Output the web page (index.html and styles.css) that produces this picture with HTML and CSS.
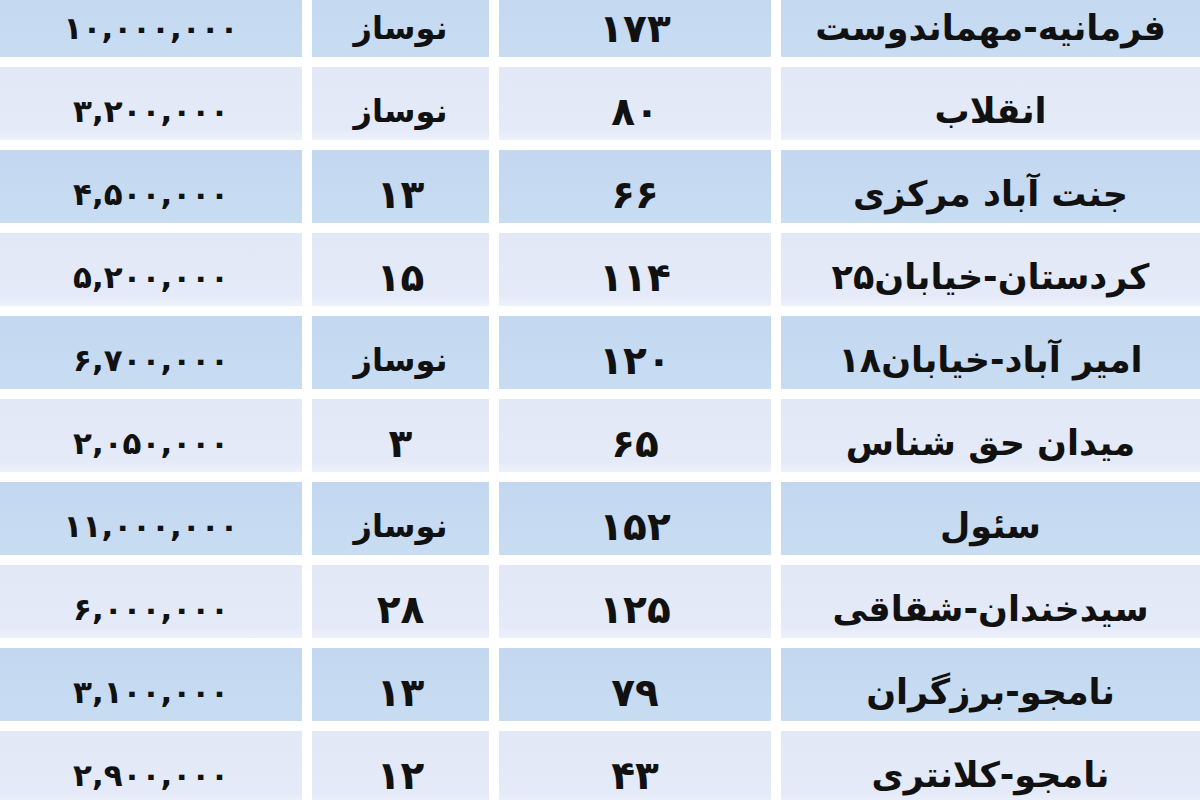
FILE: index.html
```html
<!DOCTYPE html>
<html lang="fa" dir="rtl">
<head>
<meta charset="utf-8">
<title>قیمت آپارتمان</title>
<link rel="stylesheet" href="styles.css">
</head>
<body>
<div class="sheet">
  <div class="row dark"><div class="cell name">فرمانیه-مهماندوست</div><div class="cell num">۱۷۳</div><div class="cell">نوساز</div><div class="cell price">۱۰,۰۰۰,۰۰۰</div></div>
  <div class="row light"><div class="cell name">انقلاب</div><div class="cell num">۸۰</div><div class="cell">نوساز</div><div class="cell price">۳,۲۰۰,۰۰۰</div></div>
  <div class="row dark"><div class="cell name">جنت آباد مرکزی</div><div class="cell num">۶۶</div><div class="cell num">۱۳</div><div class="cell price">۴,۵۰۰,۰۰۰</div></div>
  <div class="row light"><div class="cell name">کردستان-خیابان۲۵</div><div class="cell num">۱۱۴</div><div class="cell num">۱۵</div><div class="cell price">۵,۲۰۰,۰۰۰</div></div>
  <div class="row dark"><div class="cell name">امیر آباد-خیابان۱۸</div><div class="cell num">۱۲۰</div><div class="cell">نوساز</div><div class="cell price">۶,۷۰۰,۰۰۰</div></div>
  <div class="row light"><div class="cell name">میدان حق شناس</div><div class="cell num">۶۵</div><div class="cell num">۳</div><div class="cell price">۲,۰۵۰,۰۰۰</div></div>
  <div class="row dark"><div class="cell name">سئول</div><div class="cell num">۱۵۲</div><div class="cell">نوساز</div><div class="cell price">۱۱,۰۰۰,۰۰۰</div></div>
  <div class="row light"><div class="cell name">سیدخندان-شقاقی</div><div class="cell num">۱۲۵</div><div class="cell num">۲۸</div><div class="cell price">۶,۰۰۰,۰۰۰</div></div>
  <div class="row dark"><div class="cell name">نامجو-برزگران</div><div class="cell num">۷۹</div><div class="cell num">۱۳</div><div class="cell price">۳,۱۰۰,۰۰۰</div></div>
  <div class="row light"><div class="cell name">نامجو-کلانتری</div><div class="cell num">۴۳</div><div class="cell num">۱۲</div><div class="cell price">۲,۹۰۰,۰۰۰</div></div>
</div>
</body>
</html>
```
FILE: styles.css
```css
html, body {
  margin: 0;
  padding: 0;
  background: #ffffff;
}
body {
  width: 1200px;
  height: 800px;
  overflow: hidden;
  font-family: "DejaVu Sans", sans-serif;
  font-weight: bold;
  color: #111111;
}
.sheet {
  direction: rtl;
  margin-top: -16px;
  display: flex;
  flex-direction: column;
  gap: 10px;
}
.row {
  display: grid;
  grid-template-columns: 419px 272px 177px 1fr;
  column-gap: 10px;
  height: 73px;
}
.cell {
  display: flex;
  align-items: center;
  justify-content: center;
  padding-top: 15px;
  box-sizing: border-box;
  font-size: 32px;
  line-height: 1;
  white-space: nowrap;
}
.name {
  font-size: 35px;
}
.num {
  font-size: 39px;
}
.price {
  font-size: 31px;
  letter-spacing: -2px;
}
.dark .cell {
  background: linear-gradient(#c3d8f0, #c8dcf2);
}
.light .cell {
  background: linear-gradient(#e2e8f6, #e4eaf8 85%, #edf1fa);
}
```
